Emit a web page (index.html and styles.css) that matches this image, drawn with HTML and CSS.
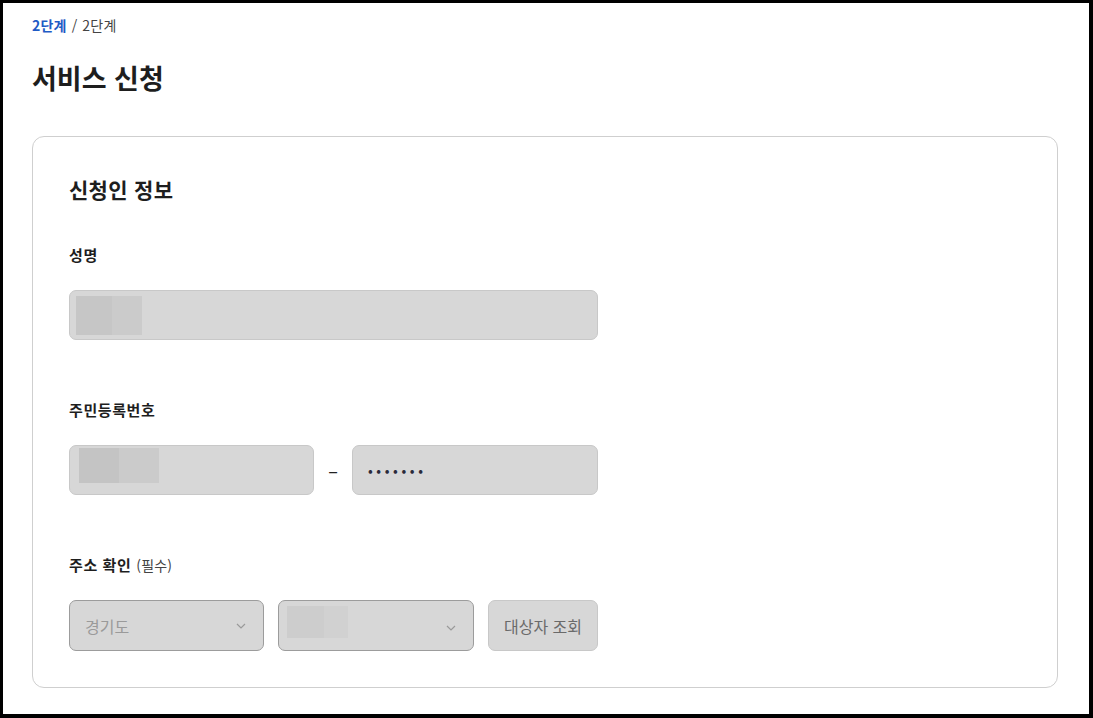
FILE: index.html
```html
<!DOCTYPE html>
<html lang="ko">
<head>
  <meta charset="UTF-8">
  <meta name="viewport" content="width=device-width, initial-scale=1.0">
  <title>서비스 신청</title>
  <link rel="stylesheet" href="styles.css">
</head>
<body>
  <div class="page">
    <nav class="breadcrumb">
      <a href="#" class="crumb-current">2단계</a>
      <span class="crumb-sep">/</span>
      <span>2단계</span>
    </nav>
    <h1 class="page-title">서비스 신청</h1>

    <section class="card">
      <h2 class="card-title">신청인 정보</h2>

      <div class="field">
        <label class="field-label">성명</label>
        <div class="input input-name">
          <span class="masked masked-name"></span>
        </div>
      </div>

      <div class="field">
        <label class="field-label">주민등록번호</label>
        <div class="id-row">
          <div class="input input-half">
            <span class="masked masked-id"></span>
          </div>
          <span class="dash">–</span>
          <div class="input input-half">
            <span class="dots">•••••••</span>
          </div>
        </div>
      </div>

      <div class="field">
        <label class="field-label">주소 확인 <small>(필수)</small></label>
        <div class="address-row">
          <div class="select select-first">
            <span class="select-text">경기도</span>
            <svg class="chevron" width="10" height="6" viewBox="0 0 10 6"><path d="M1 1l4 4 4-4" fill="none" stroke="#9a9a9a" stroke-width="1.2"/></svg>
          </div>
          <div class="select select-second">
            <span class="masked masked-city"></span>
            <svg class="chevron" width="10" height="6" viewBox="0 0 10 6"><path d="M1 1l4 4 4-4" fill="none" stroke="#9a9a9a" stroke-width="1.2"/></svg>
          </div>
          <button class="search-btn" type="button">대상자 조회</button>
        </div>
      </div>
    </section>
  </div>
</body>
</html>
```

FILE: styles.css
```css
html, body {
  margin: 0;
  padding: 0;
  background: #000;
}

body {
  font-family: "Noto Sans CJK KR", "Noto Sans", sans-serif;
  color: #1e1e1e;
}

.page {
  margin: 3px 4px 4px 3px;
  height: 711px;
  background: #fff;
  padding: 12px 0 0 29px;
  box-sizing: border-box;
  overflow: hidden;
}

.breadcrumb {
  font-size: 14px;
  line-height: 20px;
  color: #444;
  display: flex;
  gap: 5px;
  letter-spacing: 0.2px;
}

.crumb-current {
  color: #1f5bc5;
  font-weight: bold;
  text-decoration: none;
}

.page-title {
  margin: 25px 0 0;
  font-size: 27px;
  line-height: 36px;
  font-weight: bold;
  color: #1e1e1e;
}

.card {
  margin-top: 40px;
  width: 1026px;
  box-sizing: border-box;
  border: 1px solid #cfcfcf;
  border-radius: 12px;
  padding: 38px 35px 36px 36px;
}

.card-title {
  margin: 0;
  font-size: 21px;
  line-height: 28px;
  font-weight: bold;
  letter-spacing: 0.3px;
}

.field {
  margin-top: 41px;
}

.field + .field {
  margin-top: 59px;
}

.field-label {
  display: block;
  font-size: 15px;
  line-height: 22px;
  font-weight: bold;
  letter-spacing: 0.6px;
  margin-bottom: 24px;
}

.field-label small {
  font-size: 14px;
  font-weight: normal;
  letter-spacing: 0.2px;
  color: #444;
}

.input {
  height: 50px;
  box-sizing: border-box;
  background: #d7d7d7;
  border: 1px solid #c8c8c8;
  border-radius: 7px;
  display: flex;
  align-items: center;
}

.input-name {
  width: 529px;
  padding-left: 6px;
}

.masked {
  display: block;
  background: linear-gradient(to right, #c6c6c6 55%, #cbcbcb 55%);
}

.masked-name {
  width: 66px;
  height: 39px;
}

.id-row {
  display: flex;
  align-items: center;
}

.input-half {
  width: 245px;
}

.input-half + .dash + .input-half {
  width: 246px;
  padding-left: 15px;
}

.input-half:first-child {
  padding-left: 9px;
  align-items: flex-start;
  padding-top: 2px;
}

.masked-id {
  width: 80px;
  height: 35px;
  background: linear-gradient(to right, #c4c4c4 50%, #cbcbcb 50%);
}

.dash {
  width: 38px;
  text-align: center;
  font-size: 18px;
  color: #222;
}

.dots {
  font-size: 14px;
  letter-spacing: 3.6px;
  color: #2a2a3a;
}

.address-row {
  display: flex;
  gap: 14px;
  margin-top: 1px;
}

.select {
  height: 51px;
  box-sizing: border-box;
  background: #d7d7d7;
  border: 1px solid #9c9c9c;
  border-radius: 7px;
  display: flex;
  align-items: center;
  justify-content: space-between;
  padding: 0 17px 0 15px;
}

.select-first {
  width: 195px;
}

.select-second {
  width: 196px;
  padding-left: 8px;
  align-items: flex-start;
  padding-top: 5px;
}

.select-second .chevron {
  margin-top: 19px;
}

.select-text {
  font-size: 16px;
  color: #9a9a9a;
}

.masked-city {
  width: 61px;
  height: 32px;
  background: linear-gradient(to right, #cdcdcd 60%, #d1d1d1 60%);
}

.search-btn {
  width: 110px;
  height: 51px;
  background: #d7d7d7;
  border: 1px solid #c8c8c8;
  border-radius: 7px;
  font-family: inherit;
  font-size: 16px;
  color: #6a6a6a;
  padding: 0;
}
```
